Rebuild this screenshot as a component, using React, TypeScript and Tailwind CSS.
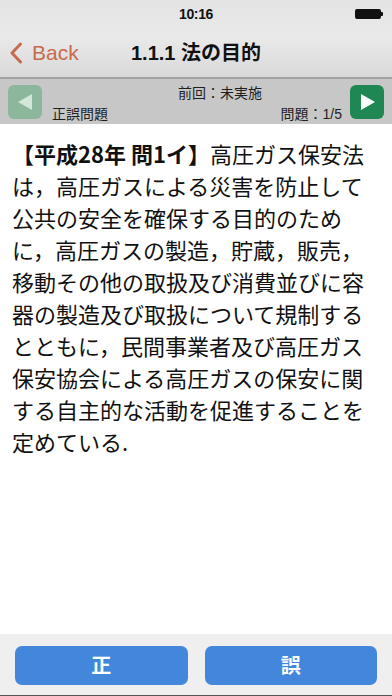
import React from "react";

const jp = "font-['Liberation_Sans','Noto_Sans_CJK_JP',sans-serif]";

function StatusBar() {
  return (
    <div className="relative h-[28px] flex items-center justify-center">
      <span className={`${jp} text-[14px] font-semibold text-[#111] tracking-tight`}>10:16</span>
      <div className="absolute right-[9px] top-[9px] flex items-center">
        <div className="w-[26px] h-[10px] rounded-[2px] bg-[#111]" />
        <div className="w-[2px] h-[4px] bg-[#111] rounded-r-[1px]" />
      </div>
    </div>
  );
}

function NavBar() {
  return (
    <div className="relative h-[49px] flex items-center">
      <div className="flex items-center pl-[9px] gap-[9px] text-[#c76b4c]">
        <svg width="14" height="22" viewBox="0 0 14 22">
          <path d="M11.5 2 L3 11 L11.5 20" fill="none" stroke="#c76b4c" strokeWidth="3" strokeLinecap="round" strokeLinejoin="round" />
        </svg>
        <span className={`${jp} text-[21px] leading-none`}>Back</span>
      </div>
      <div className={`absolute left-0 right-0 top-[12px] text-center ${jp} text-[20px] font-bold text-[#111] leading-[26px] pointer-events-none`}>
        1.1.1 法の目的
      </div>
    </div>
  );
}

function ArrowButton({ dir, active }: { dir: "left" | "right"; active: boolean }) {
  return (
    <div
      className={`w-[34px] h-[34px] rounded-[6px] flex items-center justify-center ${
        active ? "bg-[#1f8753]" : "bg-[#8cb79d]"
      }`}
    >
      <svg width="18" height="20" viewBox="0 0 18 20">
        {dir === "left" ? (
          <polygon points="16,2 16,18 2,10" fill="#d3e6da" />
        ) : (
          <polygon points="3,2 3,18 17,10" fill="#ffffff" />
        )}
      </svg>
    </div>
  );
}

function ToolBar() {
  return (
    <div className="h-[45px] bg-[#c7c7c7] flex items-center px-[8px]">
      <ArrowButton dir="left" active={false} />
      <div className={`flex-1 h-full flex flex-col ${jp} text-[14px] text-[#1e1e1e]`}>
        <div className="pl-[136px] pt-[6px] leading-[17px]">前回：未実施</div>
        <div className="flex justify-between pl-[10px] pr-[8px] pt-[4px] leading-[17px]">
          <span>正誤問題</span>
          <span>問題：1/5</span>
        </div>
      </div>
      <ArrowButton dir="right" active={true} />
    </div>
  );
}

export default function App() {
  return (
    <div className="w-[392px] h-[696px] flex flex-col bg-white overflow-hidden">
      <div className="bg-gradient-to-b from-[#e4e4e4] via-[#e9e9e9] to-[#d9d9d9] border-b-2 border-[#a3a3a3]">
        <StatusBar />
        <NavBar />
      </div>
      <ToolBar />
      <div className="flex-1 pl-[12px] pr-[20px] pt-[13px]">
        <p className="font-['Noto_Sans_CJK_JP',sans-serif] text-[22px] leading-[32px] text-[#111]">
          <span className="font-bold">【平成28年 問1イ】</span>高圧ガス保安法は，高圧ガスによる災害を防止して公共の安全を確保する目的のために，高圧ガスの製造，貯蔵，販売，移動その他の取扱及び消費並びに容器の製造及び取扱について規制するとともに，民間事業者及び高圧ガス保安協会による高圧ガスの保安に関する自主的な活動を促進することを定めている.
        </p>
      </div>
      <div className="h-[62px] bg-[#efefef] border-b border-[#555] flex items-center gap-[17px] px-[15px] pt-[1px]">
        <button className="flex-1 h-[39px] rounded-[7px] bg-[#4387dd] text-white font-['Noto_Sans_CJK_JP',sans-serif] text-[20px] font-bold">
          正
        </button>
        <button className="flex-1 h-[39px] rounded-[7px] bg-[#4387dd] text-white font-['Noto_Sans_CJK_JP',sans-serif] text-[20px] font-bold">
          誤
        </button>
      </div>
    </div>
  );
}
